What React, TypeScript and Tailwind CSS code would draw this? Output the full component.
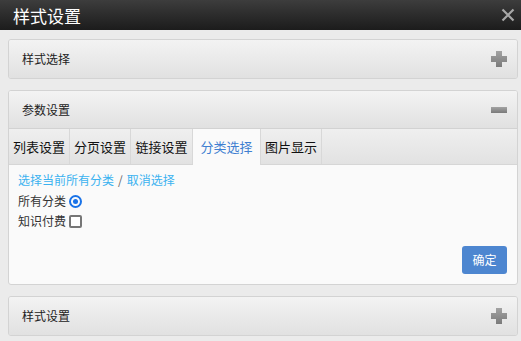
import React from "react";

const font = { fontFamily: '"Noto Sans CJK SC", "Noto Sans", sans-serif' };

const tabs = [
  { label: "列表设置", w: "w-[61px]" },
  { label: "分页设置", w: "w-[61px]" },
  { label: "链接设置", w: "w-[62px]" },
  { label: "分类选择", w: "w-[68px]", active: true },
  { label: "图片显示", w: "w-[61px]" },
];

function PlusIcon() {
  return (
    <svg width="16" height="16" viewBox="0 0 16 16">
      <defs>
        <linearGradient id="pg" x1="0" y1="0" x2="0" y2="1">
          <stop offset="0" stopColor="#a3a3a3" />
          <stop offset="1" stopColor="#7a7a7a" />
        </linearGradient>
      </defs>
      <path d="M5 0h6v5h5v6h-5v5H5v-5H0V5h5z" fill="url(#pg)" />
    </svg>
  );
}

function MinusIcon() {
  return (
    <svg width="16" height="6" viewBox="0 0 16 6">
      <defs>
        <linearGradient id="mg" x1="0" y1="0" x2="0" y2="1">
          <stop offset="0" stopColor="#a3a3a3" />
          <stop offset="1" stopColor="#7a7a7a" />
        </linearGradient>
      </defs>
      <rect width="16" height="6" fill="url(#mg)" />
    </svg>
  );
}

function PanelHeader({ title, open }: { title: string; open?: boolean }) {
  return (
    <div
      className={`h-[38px] flex items-center justify-between pl-[13px] pr-[10px] bg-gradient-to-b from-[#f3f3f3] to-[#e1e1e1] ${
        open ? "border-b border-[#d2d2d2]" : ""
      }`}
    >
      <span className="text-[12px] text-[#222]">{title}</span>
      {open ? <MinusIcon /> : <PlusIcon />}
    </div>
  );
}

export default function App() {
  return (
    <div className="w-[521px] h-[341px] bg-[#ebebeb] overflow-hidden" style={font}>
      {/* title bar */}
      <div className="h-[30px] flex items-center justify-between pl-[13px] pr-[6px] bg-gradient-to-b from-[#3d3d3d] to-[#1c1c1c]">
        <span className="text-[17px] text-white leading-none">样式设置</span>
        <svg width="14" height="14" viewBox="0 0 14 14">
          <path d="M1.5 1.5l11 11M12.5 1.5l-11 11" stroke="#a8a8a8" strokeWidth="2.2" />
        </svg>
      </div>

      <div className="pl-[8px] pr-[3px] pt-[9px] flex flex-col gap-[11px]">
        <div className="border border-[#d3d3d3] rounded-[3px] overflow-hidden">
          <PanelHeader title="样式选择" />
        </div>

        <div className="border border-[#d3d3d3] rounded-[3px] overflow-hidden bg-[#fafafa]">
          <PanelHeader title="参数设置" open />

          {/* tabs */}
          <div className="flex h-[36px] bg-gradient-to-b from-[#efefef] to-[#e2e2e2] border-b border-[#d6d6d6]">
            {tabs.map((t) => (
              <div
                key={t.label}
                className={`${t.w} flex items-center justify-center text-[13px] border-r border-[#d8d8d8] ${
                  t.active ? "bg-[#fafafa] text-[#3f7fd1] -mb-px" : "text-[#111]"
                }`}
              >
                {t.label}
              </div>
            ))}
          </div>

          {/* content */}
          <div className="pl-[9px] pr-[10px] pt-[6px] pb-[10px] text-[12px] text-[#333]">
            <div className="text-[#3bb2f0]">
              <span>选择当前所有分类</span>
              <span className="text-[#666] mx-[4px]">/</span>
              <span>取消选择</span>
            </div>
            <div className="flex items-center gap-[3px] mt-[3px] h-[18px]">
              <span>所有分类</span>
              <span className="w-[13px] h-[13px] rounded-full border-[2px] border-[#1a73e8] flex items-center justify-center">
                <span className="w-[5px] h-[5px] rounded-full bg-[#1a73e8]" />
              </span>
            </div>
            <div className="flex items-center gap-[3px] mt-[2px] h-[18px]">
              <span>知识付费</span>
              <span className="w-[13px] h-[13px] rounded-[2px] border-[2px] border-[#767676] bg-white" />
            </div>
            <div className="flex justify-end mt-[16px]">
              <button className="w-[45px] h-[28px] rounded-[3px] bg-[#4d86d0] text-white text-[12px]">
                确定
              </button>
            </div>
          </div>
        </div>

        <div className="border border-[#d3d3d3] rounded-[3px] overflow-hidden">
          <PanelHeader title="样式设置" />
        </div>
      </div>
    </div>
  );
}
